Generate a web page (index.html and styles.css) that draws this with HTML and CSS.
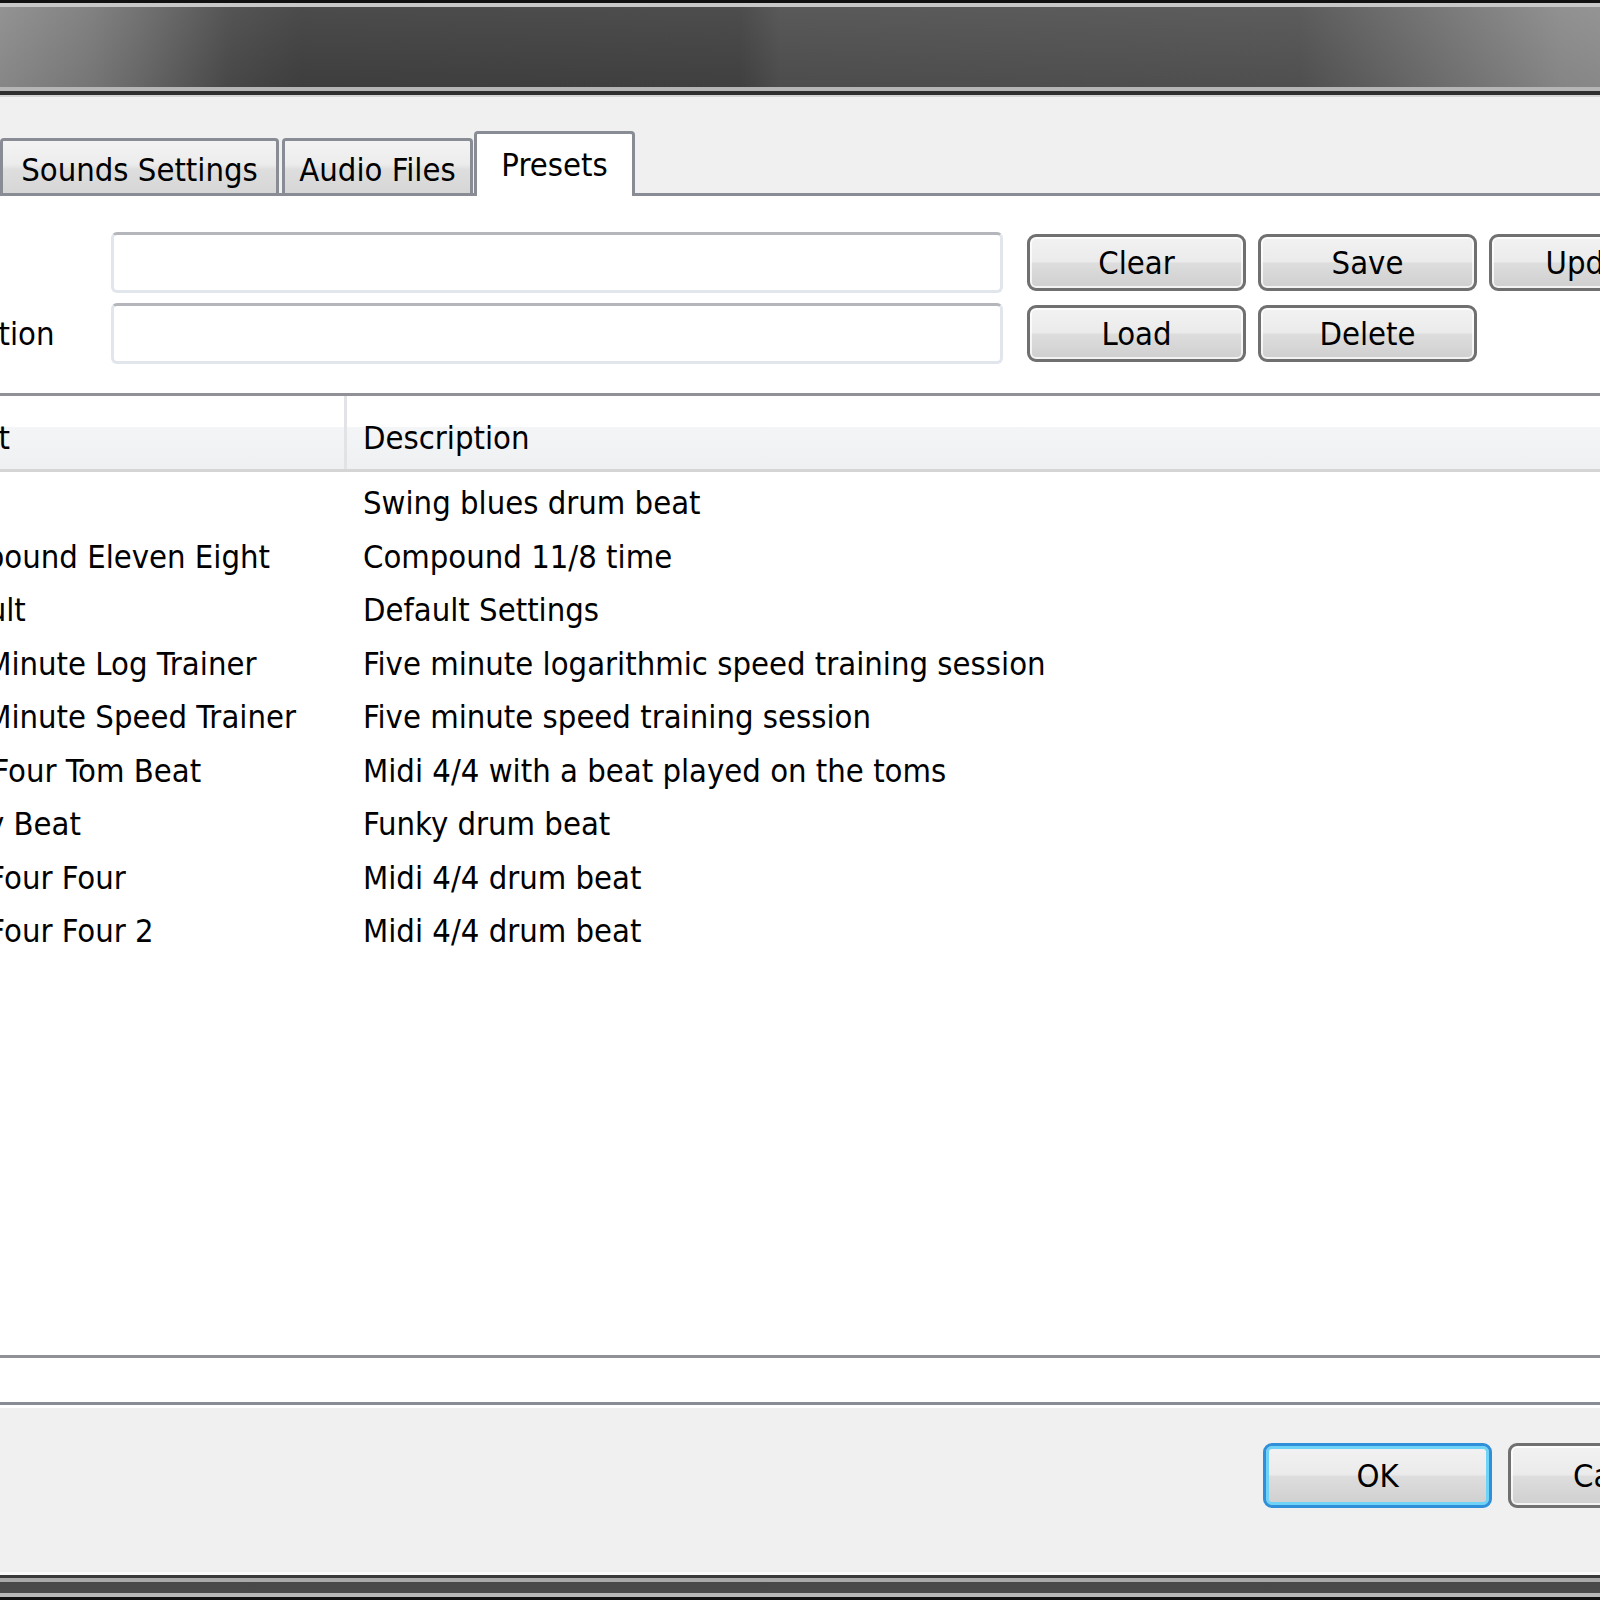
FILE: index.html
```html
<!DOCTYPE html>
<html lang="en">
<head>
    <meta charset="UTF-8">
    <meta name="viewport" content="width=device-width, initial-scale=1.0">
    <title>Settings - Presets</title>
    <link rel="stylesheet" href="styles.css">
</head>
<body>
    <div class="window">
        <div class="title-bar"></div>

        <div class="dialog">
            <div class="tab-strip">
                <div class="tab tab-general">General</div>
                <div class="tab tab-sounds">Sounds Settings</div>
                <div class="tab tab-audio">Audio Files</div>
                <div class="tab tab-active">Presets</div>
            </div>

            <div class="tab-panel">
                <div class="preset-form">
                    <label class="form-label" for="presetName">Name</label>
                    <input class="text-field" type="text" id="presetName">
                    <div class="button-group">
                        <button class="push-button">Clear</button>
                        <button class="push-button">Save</button>
                        <button class="push-button">Update</button>
                    </div>

                    <label class="form-label" for="presetDescription">Description</label>
                    <input class="text-field" type="text" id="presetDescription">
                    <div class="button-group">
                        <button class="push-button">Load</button>
                        <button class="push-button">Delete</button>
                    </div>
                </div>

                <div class="preset-list">
                    <div class="list-header">
                        <div class="header-cell header-name">Preset</div>
                        <div class="header-cell">Description</div>
                    </div>
                    <div class="list-rows">
                        <div class="list-row"><div class="cell cell-name">Blues</div><div class="cell">Swing blues drum beat</div></div>
                        <div class="list-row"><div class="cell cell-name">Compound Eleven Eight</div><div class="cell">Compound 11/8 time</div></div>
                        <div class="list-row"><div class="cell cell-name">Default</div><div class="cell">Default Settings</div></div>
                        <div class="list-row"><div class="cell cell-name">Five Minute Log Trainer</div><div class="cell">Five minute logarithmic speed training session</div></div>
                        <div class="list-row"><div class="cell cell-name">Five Minute Speed Trainer</div><div class="cell">Five minute speed training session</div></div>
                        <div class="list-row"><div class="cell cell-name">Four Four Tom Beat</div><div class="cell">Midi 4/4 with a beat played on the toms</div></div>
                        <div class="list-row"><div class="cell cell-name">Funky Beat</div><div class="cell">Funky drum beat</div></div>
                        <div class="list-row"><div class="cell cell-name">Midi Four Four</div><div class="cell">Midi 4/4 drum beat</div></div>
                        <div class="list-row"><div class="cell cell-name">Midi Four Four 2</div><div class="cell">Midi 4/4 drum beat</div></div>
                    </div>
                </div>
            </div>

            <div class="dialog-buttons">
                <button class="push-button default-button">OK</button>
                <button class="push-button">Cancel</button>
            </div>
        </div>

        <div class="frame-bottom"></div>
    </div>
</body>
</html>
```

FILE: styles.css
```css
html, body {
    margin: 0;
    padding: 0;
    width: 1600px;
    height: 1600px;
    overflow: hidden;
    background-color: #f0f0f0;
}

body {
    font-family: "DejaVu Sans Condensed", "DejaVu Sans", sans-serif;
    font-stretch: condensed;
    font-size: 32.5px;
    color: #000;
}

/* the window is wider than the picture, both sides are cut */
.window {
    width: 1920px;
    margin-left: -160px;
}

.title-bar {
    height: 97px;
    background:
        linear-gradient(to bottom,
            #111 0, #111 3px,
            #c8c8c8 3px, #c8c8c8 7px,
            rgba(255, 255, 255, 0.06) 7px, rgba(0, 0, 0, 0.04) 87px,
            #b5b5b5 87px, #b5b5b5 91px,
            #2e2e2e 91px, #2e2e2e 95px,
            #d4d4d4 95px, #d4d4d4 97px),
        linear-gradient(to right,
            #9a9a9a 0, #8c8c8c 160px, #7a7a7a 250px, #6a6a6a 300px,
            #4a4a4a 390px, #404040 460px, #424242 900px,
            #4f4f4f 940px, #525252 1460px, #6c6c6c 1580px,
            #8a8a8a 1720px, #9a9a9a 1920px);
}

.dialog {
    height: 1475px;
    padding: 0 4px;
    background-color: #f0f0f0;
    display: flex;
    flex-direction: column;
}

/* tabs */
.tab-strip {
    height: 96px;
    display: flex;
    align-items: flex-end;
    gap: 3px;
}

.tab {
    box-sizing: border-box;
    height: 55px;
    padding-top: 10px;
    border: 3px solid #898c95;
    border-bottom: none;
    border-radius: 4px 4px 0 0;
    background: linear-gradient(to bottom, #f3f3f3 0%, #ececec 45%, #dedede 55%, #d6d6d6 100%);
    text-align: center;
    white-space: nowrap;
    line-height: 38px;
}

.tab-general {
    width: 153px;
}

.tab-sounds {
    width: 279px;
}

.tab-audio {
    width: 191px;
}

.tab-active {
    position: relative;
    z-index: 1;
    width: 161px;
    height: 65px;
    padding-top: 12px;
    margin-left: -2px;
    margin-bottom: -3px;
    background: #fff;
}

.tab-panel {
    height: 1206px;
    border: 3px solid #898c95;
    background-color: #fff;
    display: flex;
    flex-direction: column;
}

/* preset name / description form */
.preset-form {
    display: grid;
    grid-template-columns: 199px 892px auto;
    grid-auto-rows: 61px;
    column-gap: 24px;
    row-gap: 10px;
    align-items: center;
    padding: 36px 0 0 41px;
}

.form-label {
    white-space: nowrap;
}

.text-field {
    box-sizing: border-box;
    width: 892px;
    height: 61px;
    margin: 0;
    border: 3px solid #e1e5ec;
    border-top-color: #b4b6bc;
    border-radius: 6px;
    background-color: #fff;
    font: inherit;
}

.button-group {
    display: flex;
    gap: 12px;
}

.push-button {
    box-sizing: border-box;
    width: 219px;
    height: 57px;
    padding: 0;
    border: 3px solid #707070;
    border-radius: 9px;
    background: linear-gradient(to bottom, #f2f2f2 0%, #ebebeb 48%, #dddddd 52%, #cfcfcf 100%);
    box-shadow: inset 0 0 0 2px rgba(255, 255, 255, 0.75);
    font: inherit;
    color: #000;
    line-height: 48px;
}

/* preset list */
.preset-list {
    flex: 1;
    margin: 29px 50px 44px 50px;
    border: 3px solid #8f9197;
    background-color: #fff;
}

.list-header {
    display: grid;
    grid-template-columns: 447px 1fr;
    height: 73px;
    border-bottom: 3px solid #d5d5d5;
    background: linear-gradient(to bottom, #fff 0, #fff 31px, #f4f5f7 31px, #eef0f2 100%);
}

.header-cell {
    padding: 12px 0 0 16px;
    line-height: 61px;
    white-space: nowrap;
}

.header-name {
    padding-left: 19px;
    border-right: 3px solid #e2e3e6;
}

.list-rows {
    padding-top: 5px;
}

.list-row {
    display: grid;
    grid-template-columns: 447px 1fr;
    height: 53.5px;
    line-height: 53.5px;
    white-space: nowrap;
}

.cell {
    padding-left: 16px;
}

.cell-name {
    padding-left: 19px;
}

/* OK / Cancel */
.dialog-buttons {
    flex: 1;
    display: flex;
    justify-content: flex-end;
    align-items: flex-start;
    gap: 16px;
    padding: 35px 19px 0 0;
    border-top: 3px solid #fff;
}

.dialog-buttons .push-button {
    width: 229px;
    height: 65px;
    line-height: 56px;
}

.default-button {
    border-color: #2f8fd8;
    box-shadow: inset 0 0 0 3px #6fd3f8;
}

.frame-bottom {
    height: 28px;
    background: linear-gradient(to bottom,
        #fafafa 0, #fafafa 3px,
        #3a3a3a 3px, #3a3a3a 6px,
        #a8a8a8 6px, #a8a8a8 10px,
        #484848 10px, #4a4a4a 21px,
        #b8b8b8 21px, #b8b8b8 25px,
        #111 25px, #111 28px);
}
```
